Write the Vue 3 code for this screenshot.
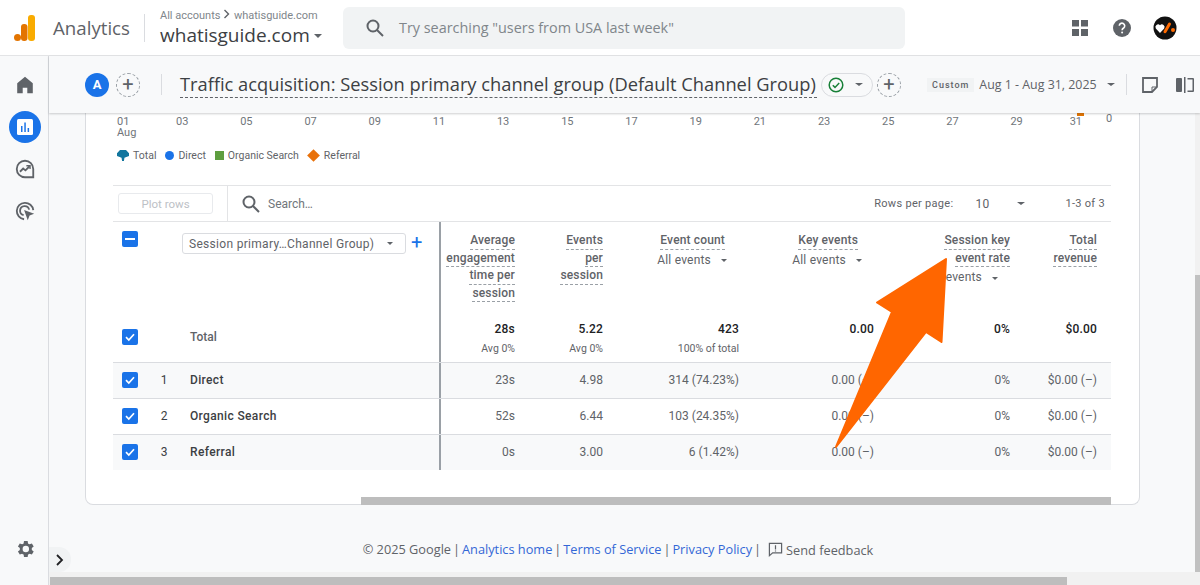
<script setup>
const xTicks = ['03','05','07','09','11','13','15','17','19','21','23','25','27','29','31'];

const legend = [
	{ name: 'Total', shape: 'total' },
	{ name: 'Direct', shape: 'direct' },
	{ name: 'Organic Search', shape: 'organic' },
	{ name: 'Referral', shape: 'referral' }
];

const headers = [
	{ lines: ['Average', 'engagement', 'time per', 'session'] },
	{ lines: ['Events', 'per', 'session'] },
	{ lines: ['Event count'], sub: 'All events', inset: 'inset' },
	{ lines: ['Key events'], sub: 'All events', inset: 'inset-key' },
	{ lines: ['Session key', 'event rate'], sub: 'All events' },
	{ lines: ['Total', 'revenue'] }
];

const totals = [
	{ v: '28s', s: 'Avg 0%' },
	{ v: '5.22', s: 'Avg 0%' },
	{ v: '423', s: '100% of total' },
	{ v: '0.00' },
	{ v: '0%' },
	{ v: '$0.00' }
];

const rows = [
	{ n: 1, name: 'Direct', vals: ['23s', '4.98', '314 (74.23%)', '0.00 (–)', '0%', '$0.00 (–)'] },
	{ n: 2, name: 'Organic Search', vals: ['52s', '6.44', '103 (24.35%)', '0.00 (–)', '0%', '$0.00 (–)'] },
	{ n: 3, name: 'Referral', vals: ['0s', '3.00', '6 (1.42%)', '0.00 (–)', '0%', '$0.00 (–)'] }
];
</script>

<template>
<div class="page">
	<header class="topbar">
		<svg class="logo" width="24" height="28" viewBox="0 0 24 28">
			<rect x="15" y="1" width="7" height="26" rx="3" fill="#f9ab00" />
			<rect x="8" y="10" width="6.5" height="17" rx="3" fill="#e37400" />
			<circle cx="4.5" cy="23.5" r="3.5" fill="#e37400" />
		</svg>
		<span class="brand">Analytics</span>
		<span class="top-divider"></span>
		<div class="account">
			<div class="crumbs">All accounts
				<svg width="8" height="10" viewBox="0 0 8 10"><path d="M1.5 1l4 4-4 4" fill="none" stroke="#5f6368" stroke-width="1.4" /></svg>
				whatisguide.com</div>
			<div class="property">whatisguide.com<i class="caret"></i></div>
		</div>
		<div class="searchbox">
			<svg width="20" height="20" viewBox="0 0 20 20" fill="none" stroke="#5f6368" stroke-width="2"><circle cx="8" cy="8" r="5.5" /><path d="M12 12l6 6" /></svg>
			<span>Try searching "users from USA last week"</span>
		</div>
		<div class="top-icons">
			<svg width="18" height="18" viewBox="0 0 18 18" fill="#5f6368"><rect x="1" y="1" width="7" height="6.5" /><rect x="10" y="1" width="7" height="6.5" /><rect x="1" y="10" width="7" height="7" /><rect x="10" y="10" width="7" height="7" /></svg>
			<svg width="20" height="20" viewBox="0 0 20 20"><circle cx="10" cy="10" r="9" fill="#5f6368" /><path d="M7.3 7.8a2.7 2.7 0 1 1 4.3 2.2c-1 .7-1.5 1.1-1.5 2.2" fill="none" stroke="#fff" stroke-width="1.6" /><circle cx="10.1" cy="14.6" r="1" fill="#fff" /></svg>
			<svg class="account-pic" width="24" height="24" viewBox="0 0 24 24"><circle cx="12" cy="12" r="11.5" fill="#111" /><path d="M7 17L2.800 12.500a2.700 2.700 0 0 1 4.200-3.300a2.700 2.700 0 0 1 4.200 3.300z" fill="#fff" /><path d="M12 15.700L16.500 8" fill="none" stroke="#ff6a00" stroke-width="3" stroke-linecap="round" /><circle cx="20" cy="14" r="2" fill="#ff6a00" /></svg>
		</div>
	</header>

	<div class="body">
		<nav class="sidebar">
			<svg class="nav-icon first" width="22" height="22" viewBox="0 0 24 24" fill="#5f6368"><path d="M12 3L3.500 10v11H9.500v-6h5v6h6V10z" /></svg>
			<div class="nav-active">
				<svg width="18" height="18" viewBox="0 0 18 18"><rect x="1" y="1" width="16" height="16" rx="1.5" fill="#fff" /><path d="M5 8h1.500v6H5zM8.300 4.500h1.500V14H8.300zM11.600 10h1.500v4h-1.500z" fill="#1a73e8" /></svg>
			</div>
			<svg class="nav-icon" width="22" height="22" viewBox="0 0 24 24" fill="none" stroke="#5f6368" stroke-width="2"><path d="M21 21H12a9 9 0 1 1 9-9z" /><path d="M6.500 15l3.500-3.500 2.500 2L17 9" /><path d="M13.500 8.500h4V12" stroke-width="1.500" /></svg>
			<svg class="nav-icon" width="22" height="22" viewBox="0 0 24 24" fill="none" stroke="#5f6368" stroke-width="2"><path d="M11 21a9 9 0 1 1 10-10" /><path d="M10.500 16.500a5 5 0 1 1 6-6" /><path d="M11 11l11 4-5 2-2 5z" fill="#5f6368" stroke="none" /></svg>
			<svg class="nav-icon settings" width="22" height="22" viewBox="0 0 24 24" fill="#5f6368"><path fill-rule="evenodd" d="M19.400 13a7.600 7.600 0 0 0 0-2l2.100-1.600-2-3.500-2.500 1a7.300 7.300 0 0 0-1.700-1L14.900 3.200h-4l-.4 2.700a7.300 7.300 0 0 0-1.700 1l-2.500-1-2 3.500L6.400 11a7.600 7.600 0 0 0 0 2l-2.100 1.600 2 3.500 2.500-1c.5.4 1.100.7 1.700 1l.4 2.700h4l.4-2.700c.6-.3 1.200-.6 1.700-1l2.500 1 2-3.500zM12.900 15.500a3.500 3.500 0 1 1 0-7 3.500 3.500 0 0 1 0 7z" /></svg>
		</nav>

		<div class="main">
			<div class="subheader">
				<span class="avatar-a">A</span>
				<span class="add-circle">+</span>
				<span class="sub-divider"></span>
				<h1 class="title">Traffic acquisition: Session primary channel group (Default Channel Group)</h1>
				<span class="status-pill">
					<svg width="16" height="16" viewBox="0 0 16 16" fill="none" stroke="#188038" stroke-width="1.5"><circle cx="8" cy="8" r="6.8" /><path d="M4.800 8.200l2.200 2.200 4.200-4.400" /></svg>
					<i class="caret small"></i>
				</span>
				<span class="add-circle second">+</span>
				<span class="chip">Custom</span>
				<span class="date">Aug 1 - Aug 31, 2025</span>
				<i class="caret small date-caret"></i>
				<span class="sub-divider right"></span>
				<svg class="note" width="18" height="18" viewBox="0 0 18 18" fill="none" stroke="#5f6368" stroke-width="1.8"><path d="M2 2h14v9l-5 5H2z" /><path d="M16 11h-5v5" stroke-width="1" /></svg>
				<svg class="compare" width="18" height="16" viewBox="0 0 18 16" fill="#5f6368"><rect x="0" y="1" width="6" height="14" rx="1" /><rect x="8" y="0" width="1.5" height="16" /><path d="M11.500 1H17a1 1 0 0 1 1 1v12a1 1 0 0 1-1 1h-5.500v-1.500h5v-11h-5z" /></svg>
			</div>

			<div class="scroll">
				<div class="content">
					<section class="card">
						<div class="axis">
							<div class="tick first-tick">01<br>Aug</div>
							<div v-for="t in xTicks" :key="t" class="tick" :class="{ 'last-tick': t === '31' }">{{ t }}</div>
							<div class="tick zero">0</div>
							<i class="marker"></i>
						</div>
						<div class="legend">
							<span v-for="l in legend" :key="l.name" class="legend-item">
								<i :class="['swatch', l.shape]"></i>{{ l.name }}
							</span>
						</div>

						<div class="toolbar">
							<div class="plot-wrap"><button class="plot-btn">Plot rows</button></div>
							<div class="table-search">
								<svg width="20" height="20" viewBox="0 0 20 20" fill="none" stroke="#5f6368" stroke-width="2"><circle cx="8" cy="8" r="5.5" /><path d="M12 12l6 6" /></svg>
								<span>Search…</span>
							</div>
							<div class="pager">
								<span>Rows per page:</span>
								<span class="page-size">10</span>
								<i class="caret small"></i>
								<span class="range">1-3 of 3</span>
							</div>
						</div>

						<div class="grid head-row">
							<div class="dim head-dim">
								<span class="check minus"><i></i></span>
								<span class="dim-select">Session primary…Channel Group)<i class="caret tiny"></i></span>
								<span class="dim-plus">+</span>
							</div>
							<div v-for="(h, i) in headers" :key="i" class="metric head-metric">
								<span v-for="line in h.lines" :key="line" class="head-line" :class="h.inset">{{ line }}</span>
								<span v-if="h.sub" class="head-sub">{{ h.sub }}<i class="caret tiny"></i></span>
							</div>
						</div>

						<div class="grid total-row">
							<div class="dim">
								<span class="check"><svg width="12" height="12" viewBox="0 0 12 12"><path d="M2 6.200l2.800 2.800L10 3.200" fill="none" stroke="#fff" stroke-width="1.7" /></svg></span>
								<span class="total-label">Total</span>
							</div>
							<div v-for="(t, i) in totals" :key="i" class="metric total-metric">
								<div class="total-val">{{ t.v }}</div>
								<div v-if="t.s" class="total-sub">{{ t.s }}</div>
							</div>
						</div>

						<div v-for="r in rows" :key="r.n" class="grid data-row" :class="{ shaded: r.n % 2 === 1 }">
							<div class="dim">
								<span class="check"><svg width="12" height="12" viewBox="0 0 12 12"><path d="M2 6.200l2.800 2.800L10 3.200" fill="none" stroke="#fff" stroke-width="1.7" /></svg></span>
								<span class="row-num">{{ r.n }}</span>
								<span class="row-name">{{ r.name }}</span>
							</div>
							<div v-for="(v, i) in r.vals" :key="i" class="metric data-metric">{{ v }}</div>
						</div>

						<div class="table-scroll"><i></i></div>
					</section>

					<footer class="footer">
						<span>© 2025 Google</span><span class="bar">|</span>
						<a>Analytics home</a><span class="bar">|</span>
						<a>Terms of Service</a><span class="bar">|</span>
						<a>Privacy Policy</a><span class="bar">|</span>
						<svg class="fb-icon" width="15" height="15" viewBox="0 0 16 16" fill="none" stroke="#5f6368" stroke-width="1.3"><path d="M1.500 1.500h13v10H5l-3.500 3z" /><path d="M8 3.500v4.500M8 9v1.200" /></svg>
						<span class="feedback">Send feedback</span>
					</footer>
				</div>
				<div class="v-scroll"><i></i></div>
			</div>
			<div class="h-scroll"><i></i></div>
			<div class="expand">
				<svg width="10" height="12" viewBox="0 0 10 12"><path d="M2 1l5 5-5 5" fill="none" stroke="#202124" stroke-width="1.8" /></svg>
			</div>
		</div>
	</div>

	<svg class="arrow" width="1200" height="585" viewBox="0 0 1200 585">
		<path d="M946 259L877 302.500L892 312L836 447L926 332L941.500 342Z" fill="#ff6600" stroke="#ff6600" stroke-width="2" stroke-linejoin="round" />
	</svg>
</div>
</template>

<style>
html, body { margin: 0; background: #fff; }
</style>

<style scoped>
.page {
	position: relative;
	width: 1200px;
	height: 585px;
	overflow: hidden;
	display: flex;
	flex-direction: column;
	font-family: Roboto, "Liberation Sans", sans-serif;
	color: #5f6368;
	background: #fff;
}

.caret {
	display: inline-block;
	width: 0;
	height: 0;
	border-left: 4px solid transparent;
	border-right: 4px solid transparent;
	border-top: 4px solid #5f6368;
	margin-left: 4px;
	vertical-align: middle;
}
.caret.small {
	border-top-width: 3.5px;
}
.caret.tiny {
	border-left-width: 3.5px;
	border-right-width: 3.5px;
	border-top-width: 3.5px;
}

/* top bar */
.topbar {
	height: 56px;
	flex: none;
	display: flex;
	align-items: center;
	box-sizing: border-box;
	padding-left: 13px;
	border-bottom: 1px solid #e3e4e6;
}
.logo { flex: none; }
.brand {
	margin-left: 16px;
	font-family: "Open Sans", sans-serif;
	font-size: 18.7px;
	color: #5f6368;
	width: 91px;
}
.top-divider {
	width: 1px;
	height: 28px;
	background: #dadce0;
}
.account {
	margin-left: 15px;
	width: 183px;
}
.crumbs {
	font-size: 11px;
	line-height: 14px;
	color: #80868b;
	margin-top: 1px;
}
.property {
	font-family: "Open Sans", sans-serif;
	font-size: 19px;
	line-height: 25px;
	color: #3c4043;
}
.searchbox {
	width: 562px;
	height: 42px;
	border-radius: 6px;
	background: #f1f3f4;
	display: flex;
	align-items: center;
	box-sizing: border-box;
	padding-left: 22px;
	gap: 14px;
	font-family: "Open Sans", sans-serif;
	font-size: 14.4px;
	color: #80868b;
}
.top-icons {
	margin-left: 166px;
	display: flex;
	align-items: center;
	gap: 23px;
}
.account-pic { margin-left: -2px; }

.body {
	flex: 1;
	min-height: 0;
	display: flex;
}

/* side nav */
.sidebar {
	width: 46px;
	flex: none;
	border-right: 1px solid #dadce0;
	background: #f8f9fa;
	display: flex;
	flex-direction: column;
	align-items: center;
	padding: 18px 0 0 2px;
}
.nav-icon { flex: none; }
.nav-active {
	width: 32px;
	height: 32px;
	margin: 15px 0 15px;
	border-radius: 50%;
	background: #1a73e8;
	display: flex;
	align-items: center;
	justify-content: center;
}
.nav-icon + .nav-icon { margin-top: 20px; }
.nav-icon.settings { margin-top: auto; margin-bottom: 25px; }

.main {
	position: relative;
	flex: 1;
	min-width: 0;
	display: flex;
	flex-direction: column;
	background: #f8f9fa;
}

/* report header */
.subheader {
	height: 57px;
	flex: none;
	position: relative;
	z-index: 2;
	display: flex;
	align-items: center;
	padding-left: 36px;
	background: #f8f9fa;
	box-shadow: 0 1px 2px rgba(60, 64, 67, .25);
}
.avatar-a {
	width: 24px;
	height: 24px;
	border-radius: 50%;
	background: #1a73e8;
	color: #fff;
	font-size: 13px;
	font-weight: 700;
	line-height: 24px;
	text-align: center;
}
.add-circle {
	width: 24px;
	height: 24px;
	margin-left: 7px;
	box-sizing: border-box;
	border: 1px dashed #9aa0a6;
	border-radius: 50%;
	font-size: 20px;
	line-height: 20px;
	text-align: center;
	color: #5f6368;
}
.add-circle.second { margin-left: 4px; }
.sub-divider {
	width: 1px;
	height: 21px;
	margin: 0 18px 0 21px;
	background: #dadce0;
}
.sub-divider.right { margin: 0 14px 0 11px; }
.title {
	margin: 0;
	padding-bottom: 1px;
	font-family: "Open Sans", sans-serif;
	font-size: 18.3px;
	font-weight: 400;
	line-height: 24px;
	white-space: nowrap;
	width: 637px;
	color: #3c4043;
	border-bottom: 1px dashed #5f6368;
}
.status-pill {
	margin-left: 4px;
	width: 52px;
	height: 24px;
	box-sizing: border-box;
	border: 1px solid #dadce0;
	border-radius: 12px;
	display: flex;
	align-items: center;
	padding-left: 6px;
	gap: 7px;
}
.chip {
	margin-left: 26px;
	padding: 0 5px;
	height: 14px;
	line-height: 14px;
	background: #f1f3f4;
	font-size: 9px;
	font-weight: 500;
	letter-spacing: 1px;
}
.date {
	margin-left: 5px;
	font-family: "Open Sans", sans-serif;
	font-size: 12.4px;
	white-space: nowrap;
	width: 117px;
}
.date-caret { margin-left: 11px; }
.note { margin-right: 17px; }

.scroll {
	flex: 1;
	min-height: 0;
	display: flex;
	overflow: hidden;
}
.content {
	flex: 1;
	min-width: 0;
	padding-left: 36px;
}

/* card */
.card {
	width: 1055px;
	box-sizing: border-box;
	height: 392px;
	background: #fff;
	border: 1px solid #dadce0;
	border-top: none;
	border-radius: 0 0 8px 8px;
	padding: 0 28px 0 27px;
	font-size: 12px;
}
.axis {
	position: relative;
	height: 30px;
	display: grid;
	grid-template-columns: repeat(16, 64.2px);
	padding-top: 3px;
	box-sizing: border-box;
	font-size: 11px;
	line-height: 11px;
	color: #70757a;
}
.tick {
	margin-left: -27px;
	width: 64px;
	text-align: center;
}
.first-tick {
	margin-left: 4px;
	text-align: left;
}
.last-tick { margin-left: -32px; }
.zero {
	position: absolute;
	left: 964px;
	top: 0;
	margin-left: 0;
}
.marker {
	position: absolute;
	left: 964px;
	top: 0;
	width: 7px;
	height: 3px;
	background: #e37400;
}
.legend {
	height: 42px;
	display: flex;
	align-items: flex-start;
	padding: 6px 0 0 4px;
	box-sizing: border-box;
	gap: 9px;
	font-size: 10.5px;
	line-height: 13px;
	color: #5f6368;
}
.legend-item {
	display: flex;
	align-items: center;
	gap: 4px;
}
.swatch {
	display: inline-block;
	width: 9px;
	height: 9px;
}
.swatch.total {
	width: 12px;
	height: 11px;
	background: #12769e;
	clip-path: polygon(0 30%, 25% 0, 75% 0, 100% 30%, 100% 55%, 62% 70%, 58% 100%, 42% 100%, 38% 70%, 0 55%);
}
.swatch.direct { background: #1a73e8; border-radius: 50%; }
.swatch.organic { background: #5e9e3f; }
.swatch.referral { background: #e8710a; transform: rotate(45deg); margin: 0 2px 0 1px; }

.toolbar {
	height: 35px;
	display: flex;
	align-items: center;
	border-top: 1px solid #e3e4e6;
	border-bottom: 1px solid #e3e4e6;
}
.plot-wrap {
	width: 115px;
	height: 100%;
	box-sizing: border-box;
	padding: 7px 0 0 5px;
	border-right: 1px solid #e3e4e6;
}
.plot-btn {
	display: block;
	width: 95px;
	height: 21px;
	padding: 0;
	background: #fff;
	border: 1px solid #e8eaed;
	border-radius: 3px;
	font: 400 11.5px Roboto, sans-serif;
	color: #bdc1c6;
}
.table-search {
	display: flex;
	align-items: center;
	gap: 7px;
	padding-left: 13px;
	flex: 1;
	font-size: 12px;
	color: #70757a;
}
.pager {
	display: flex;
	align-items: center;
	font-size: 11px;
	letter-spacing: .3px;
	color: #5f6368;
	padding-right: 6px;
}
.page-size { margin-left: 22px; font-size: 12px; width: 38px; }
.range { margin-left: 40px; }

.grid {
	display: grid;
	grid-template-columns: 328px 88px 88px 136px 135px 136px 87px;
}
.dim {
	position: relative;
	display: flex;
	align-items: center;
	padding-left: 9px;
	border-right: 2px solid #9aa0a6;
	box-sizing: border-box;
}
.metric {
	text-align: right;
	padding-right: 14px;
}
.check {
	flex: none;
	width: 16px;
	height: 16px;
	border-radius: 2px;
	background: #1a73e8;
	display: flex;
	align-items: center;
	justify-content: center;
}
.check.minus i {
	width: 10px;
	height: 2px;
	background: #fff;
}

.head-row { height: 94px; }
.head-dim {
	align-items: flex-start;
	padding-top: 9px;
}
.dim-select {
	margin: 2px 0 0 44px;
	width: 224px;
	height: 21px;
	box-sizing: border-box;
	border: 1px solid #dadce0;
	border-radius: 3px;
	padding: 0 12px 0 6px;
	display: flex;
	align-items: center;
	justify-content: space-between;
	font-size: 12px;
	letter-spacing: .3px;
	white-space: nowrap;
}
.dim-plus {
	margin: 1px 0 0 5px;
	font-size: 20px;
	line-height: 20px;
	color: #1a73e8;
}
.head-metric {
	padding-top: 10px;
	display: flex;
	flex-direction: column;
	align-items: flex-end;
}
.head-line {
	display: block;
	font-size: 12px;
	font-weight: 500;
	letter-spacing: .15px;
	line-height: 16.6px;
	border-bottom: 1px dashed #9aa0a6;
	white-space: nowrap;
}
.head-line.inset { margin-right: 14px; }
.head-line.inset-key { margin-right: 16px; }
.head-sub {
	margin-top: 2px;
	margin-right: 12px;
	line-height: 16px;
	letter-spacing: .2px;
	white-space: nowrap;
}
.head-sub .caret { margin-left: 10px; }

.total-row { height: 46px; }
.total-row .dim { padding-bottom: 4px; }
.total-label { margin-left: 52px; font-weight: 500; color: #5f6368; }
.total-metric { padding-top: 5px; }
.total-val {
	color: #202124;
	font-weight: 500;
	letter-spacing: .2px;
	line-height: 16px;
}
.total-sub {
	margin-top: 5px;
	font-size: 10.5px;
	line-height: 14px;
}

.data-row {
	height: 36px;
	box-sizing: border-box;
	border-top: 1px solid #dadce0;
	line-height: 34px;
}
.data-row.shaded { background: #f8f9fa; }
.data-row .dim { padding-bottom: 1px; }
.row-num {
	width: 52px;
	text-align: center;
	color: #3c4043;
}
.row-name {
	color: #3c4043;
	font-weight: 500;
	letter-spacing: .35px;
}
.data-metric { color: #5f6368; }

.table-scroll {
	margin-top: 27px;
	height: 8px;
	margin-left: 248px;
	background: #bdbdbd;
}

/* footer */
.footer {
	height: 44px;
	display: flex;
	align-items: center;
	justify-content: center;
	box-sizing: border-box;
	width: 1055px;
	margin-top: 22px;
	padding-left: 11px;
	font-family: "Open Sans", sans-serif;
	font-size: 12.75px;
	gap: 2px;
	color: #5f6368;
}
.footer a { color: #3367d6; }
.fb-icon { margin-left: 5px; }
.feedback { margin-left: 1px; position: relative; top: 1px; }

.v-scroll {
	width: 5px;
	flex: none;
	background: #f1f1f1;
	padding-top: 162px;
}
.v-scroll i {
	display: block;
	width: 5px;
	height: 300px;
	background: #c1c1c1;
}

.h-scroll {
	height: 13px;
	flex: none;
	background: #f1f1f1;
	padding: 5px 0 0 1px;
	box-sizing: border-box;
}
.h-scroll i {
	display: block;
	width: 1017px;
	height: 8px;
	background: #bdbdbd;
}

.expand {
	position: absolute;
	left: 0;
	bottom: 13px;
	width: 22px;
	height: 25px;
	background: #f1f3f4;
	border-radius: 0 12px 12px 0;
	display: flex;
	align-items: center;
	justify-content: center;
}

.arrow {
	position: absolute;
	left: 0;
	top: 0;
	pointer-events: none;
}
</style>
